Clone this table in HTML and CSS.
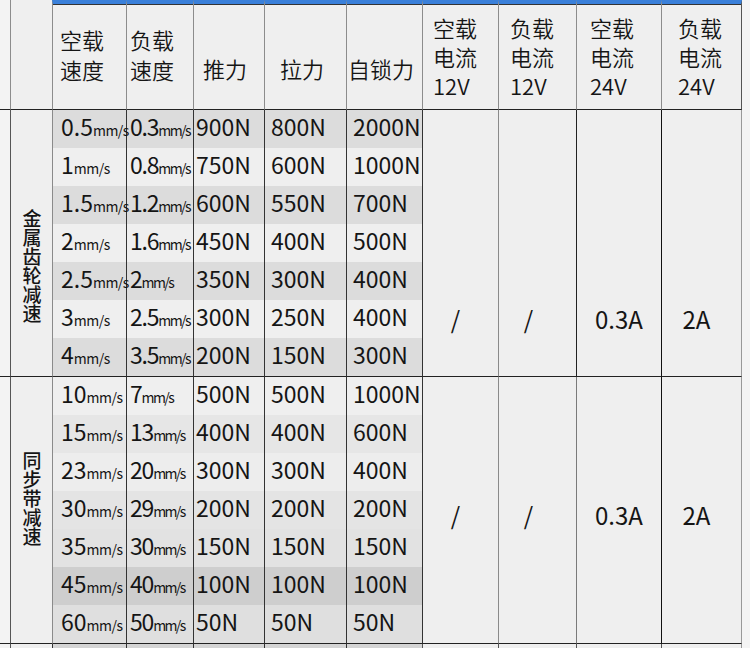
FILE: index.html
```html
<!DOCTYPE html>
<html lang="zh">
<head>
<meta charset="utf-8">
<link rel="stylesheet" href="styles.css">
</head>
<body>
<div class="sheet">
  <div class="hc edge"></div>
  <div class="hc lab-h"></div>
  <div class="hc top hl h1"><span>空载</span><span>速度</span></div>
  <div class="hc top hl h2"><span>负载</span><span>速度</span></div>
  <div class="hc top hs h3">推力</div>
  <div class="hc top hs h4">拉力</div>
  <div class="hc top hs h5">自锁力</div>
  <div class="hc top hr h6"><span>空载</span><span>电流</span><span>12V</span></div>
  <div class="hc top hr h7"><span>负载</span><span>电流</span><span>12V</span></div>
  <div class="hc top hr h8"><span>空载</span><span>电流</span><span>24V</span></div>
  <div class="hc top hr h9"><span>负载</span><span>电流</span><span>24V</span></div>

  <div class="edge-b"></div>
  <div class="grp g1"><span class="vt">金属齿轮减速</span></div>
  <div class="row sa"><div class="d">0.5<span class="u">mm/s</span></div><div class="d">0.3<span class="u">mm/s</span></div><div class="d">900N</div><div class="d">800N</div><div class="d">2000N</div></div>
  <div class="v v1 g1v">/</div>
  <div class="v v2 g1v">/</div>
  <div class="v v3 g1v">0.3A</div>
  <div class="v v4 g1v">2A</div>
  <div class="row sb"><div class="d">1<span class="u">mm/s</span></div><div class="d">0.8<span class="u">mm/s</span></div><div class="d">750N</div><div class="d">600N</div><div class="d">1000N</div></div>
  <div class="row sa"><div class="d">1.5<span class="u">mm/s</span></div><div class="d">1.2<span class="u">mm/s</span></div><div class="d">600N</div><div class="d">550N</div><div class="d">700N</div></div>
  <div class="row sb"><div class="d">2<span class="u">mm/s</span></div><div class="d">1.6<span class="u">mm/s</span></div><div class="d">450N</div><div class="d">400N</div><div class="d">500N</div></div>
  <div class="row sa"><div class="d">2.5<span class="u">mm/s</span></div><div class="d">2<span class="u">mm/s</span></div><div class="d">350N</div><div class="d">300N</div><div class="d">400N</div></div>
  <div class="row sb"><div class="d">3<span class="u">mm/s</span></div><div class="d">2.5<span class="u">mm/s</span></div><div class="d">300N</div><div class="d">250N</div><div class="d">400N</div></div>
  <div class="row sa end"><div class="d">4<span class="u">mm/s</span></div><div class="d">3.5<span class="u">mm/s</span></div><div class="d">200N</div><div class="d">150N</div><div class="d">300N</div></div>

  <div class="edge-b"></div>
  <div class="grp g2"><span class="vt">同步带减速</span></div>
  <div class="row sb"><div class="d">10<span class="u">mm/s</span></div><div class="d">7<span class="u">mm/s</span></div><div class="d">500N</div><div class="d">500N</div><div class="d">1000N</div></div>
  <div class="v v1 g2v">/</div>
  <div class="v v2 g2v">/</div>
  <div class="v v3 g2v">0.3A</div>
  <div class="v v4 g2v">2A</div>
  <div class="row sc"><div class="d">15<span class="u">mm/s</span></div><div class="d">13<span class="u">mm/s</span></div><div class="d">400N</div><div class="d">400N</div><div class="d">600N</div></div>
  <div class="row sd"><div class="d">23<span class="u">mm/s</span></div><div class="d">20<span class="u">mm/s</span></div><div class="d">300N</div><div class="d">300N</div><div class="d">400N</div></div>
  <div class="row se"><div class="d">30<span class="u">mm/s</span></div><div class="d">29<span class="u">mm/s</span></div><div class="d">200N</div><div class="d">200N</div><div class="d">200N</div></div>
  <div class="row sf"><div class="d">35<span class="u">mm/s</span></div><div class="d">30<span class="u">mm/s</span></div><div class="d">150N</div><div class="d">150N</div><div class="d">150N</div></div>
  <div class="row sg"><div class="d">45<span class="u">mm/s</span></div><div class="d">40<span class="u">mm/s</span></div><div class="d">100N</div><div class="d">100N</div><div class="d">100N</div></div>
  <div class="row sh end"><div class="d">60<span class="u">mm/s</span></div><div class="d">50<span class="u">mm/s</span></div><div class="d">50N</div><div class="d">50N</div><div class="d">50N</div></div>

  <div class="tail edge-t"></div>
  <div class="tail lab-t"></div>
  <div class="tail dat-t"></div>
  <div class="tail dat-t"></div>
  <div class="tail dat-t"></div>
  <div class="tail dat-t"></div>
  <div class="tail dat-t"></div>
  <div class="tail val-t t1"></div>
  <div class="tail val-t t2"></div>
  <div class="tail val-t t3"></div>
  <div class="tail val-t t4"></div>
</div>
</body>
</html>
```

FILE: styles.css
```css
html, body {
  margin: 0;
  padding: 0;
}

body {
  width: 750px;
  height: 648px;
  overflow: hidden;
  background: #f4f4f4;
  font-family: "Noto Sans CJK SC", "Noto Sans", sans-serif;
  font-weight: 400;
  color: #151515;
}

.sheet {
  display: grid;
  grid-template-columns: 10px 42px 74px 67px 71px 82px 76px 76px 78px 85px 81px;
  grid-template-rows: 110px repeat(6, 38px) 39px repeat(6, 38px) 39px 20px;
  width: 742px;
}

.sheet div {
  box-sizing: border-box;
}

/* header */
.hc {
  background: #efefef;
  border-bottom: 1px solid #222;
  border-left: 1px solid #8c8c8c;
  font-size: 22px;
  font-weight: 350;
}

.hc.edge {
  border-left: none;
  background: #f3f3f3;
}

.hc.top {
  border-top: 4px solid #3a80da;
  box-shadow: inset 0 1px 0 #333;
}

.hl {
  display: flex;
  flex-direction: column;
  justify-content: center;
  align-items: flex-start;
  line-height: 30px;
  padding-bottom: 5px;
}

.hs {
  line-height: 30px;
  padding-top: 49px;
  white-space: nowrap;
}

.hr {
  display: flex;
  flex-direction: column;
  justify-content: center;
  align-items: flex-start;
  line-height: 29px;
}

.h1 { padding-left: 7px; }
.h2 { padding-left: 3px; }
.h3 { padding-left: 9px; }
.h4 { padding-left: 15px; }
.h5 { padding-left: 1px; }
.h6 { padding-left: 10px; }
.h7 { padding-left: 11px; }
.h8 { padding-left: 13px; }
.h9 { padding-left: 16px; border-right: 1px solid #555; }

/* group spacer + label */
.edge-b {
  grid-row: span 7;
  background: #f3f3f3;
  border-bottom: 1px solid #222;
}

.grp {
  grid-row: span 7;
  background: #efefef;
  border-left: 1px solid #555;
  border-bottom: 1px solid #222;
  display: flex;
  justify-content: center;
  align-items: flex-start;
}

.g1 { padding-top: 99px; }
.g2 { padding-top: 74px; }

.vt {
  writing-mode: vertical-rl;
  text-orientation: upright;
  font-size: 19px;
  line-height: 20px;
  font-weight: 500;
}

/* data rows */
.row {
  display: contents;
}

.d {
  font-size: 23px;
  line-height: 32px;
  white-space: nowrap;
  border-left: 1px solid #333;
  padding-left: 6px;
}

.u {
  font-size: 14px;
  letter-spacing: -0.5px;
}

.row > .d:nth-child(1) { padding-left: 8px; border-left-color: #8a8a8a; z-index: 1; }
.row > .d:nth-child(2) { padding-left: 3px; letter-spacing: -1.2px; }
.row > .d:nth-child(2) .u { font-size: 14px; letter-spacing: -1.6px; }
.row > .d:nth-child(3) { padding-left: 2px; }

.row.end > .d { border-bottom: 1px solid #222; }

.sa > .d { background: #dcdcdc; }
.sb > .d { background: #efefef; }
.sc > .d { background: #e6e6e6; }
.sd > .d { background: #ededed; }
.se > .d { background: #e4e4e4; }
.sf > .d { background: #e2e2e2; }
.sg > .d { background: #cecece; }
.sh > .d { background: #dfdfdf; }

/* merged value columns */
.v {
  grid-row: span 7;
  background: #efefef;
  border-bottom: 1px solid #222;
  border-left: 1px solid #333;
  display: flex;
  justify-content: center;
  align-items: flex-start;
  font-size: 24px;
  line-height: 32px;
}

.g1v { padding-top: 193px; }
.g2v { padding-top: 122px; }

.v1 { border-left-color: #333; padding-right: 10px; }
.v2 { border-left-color: #8a8a8a; padding-right: 18px; }
.v3 { border-left-color: #222; }
.v4 { border-left-color: #111; padding-right: 10px; border-right: 1px solid #999; }
.v3.g2v { border-left-color: #7a7a7a; }

/* partially visible next row */
.tail {
  background: #efefef;
}

.edge-t { background: #f3f3f3; }
.lab-t { border-left: 1px solid #555; }
.dat-t { background: #d4d4d4; border-left: 1px solid #333; }
.val-t { border-left: 1px solid #555; }
.t4 { border-right: 1px solid #999; }
```
